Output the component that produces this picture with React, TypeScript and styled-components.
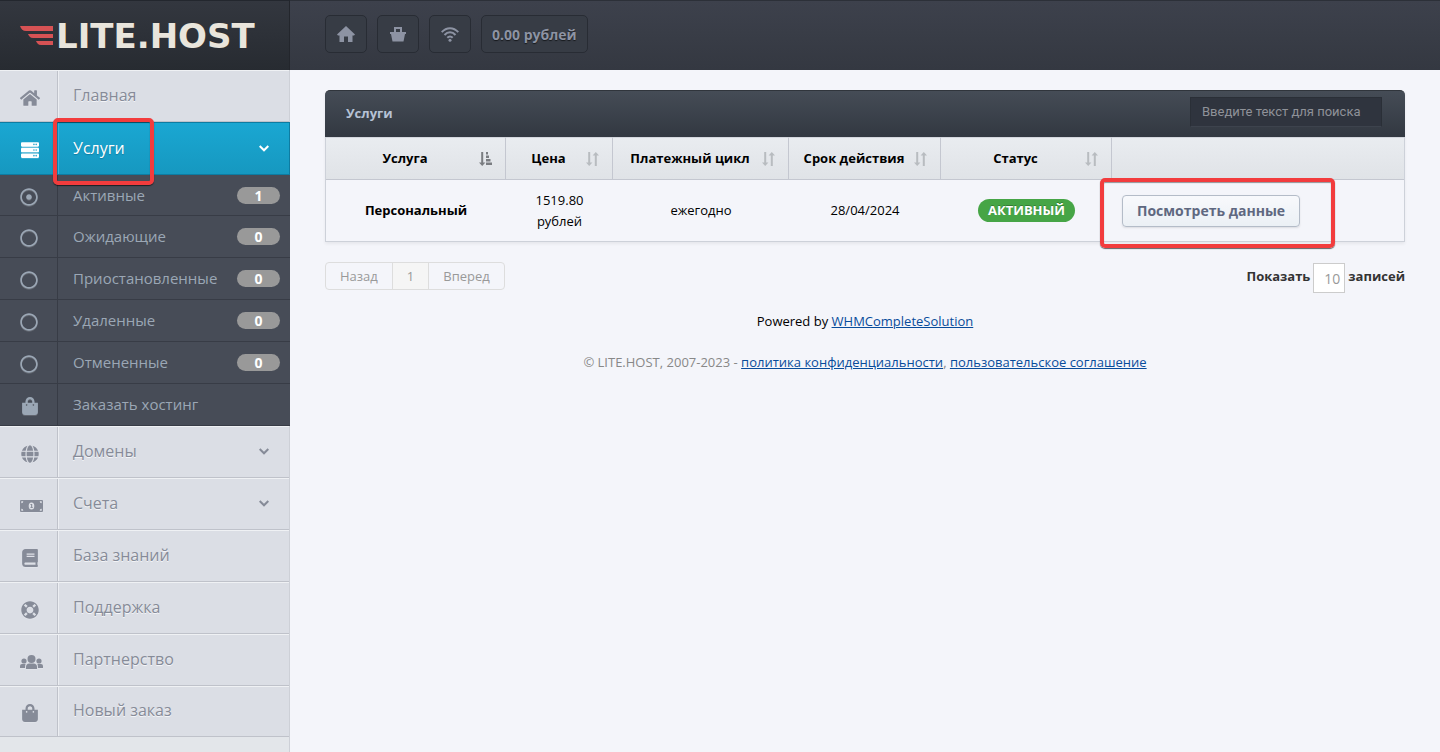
import React from "react";
import styled, { createGlobalStyle, css } from "styled-components";
import {
  FaBook,
  FaGlobe,
  FaHome,
  FaLifeRing,
  FaRegCircle,
  FaRegDotCircle,
  FaServer,
  FaShoppingBag,
} from "react-icons/fa";

const GlobalStyle = createGlobalStyle`
  *, *::before, *::after { box-sizing: border-box; }
  body {
    margin: 0;
    background: #f4f5fa;
    color: #000;
    font-family: "Open Sans", "Noto Sans", sans-serif;
    font-size: 13px;
    line-height: 21px;
  }
  button, input, select { font-family: inherit; }
`;

const Page = styled.div`
  display: grid;
  grid-template-columns: 290px minmax(0, 1fr);
  min-height: 100vh;
`;

const Sidebar = styled.aside`
  display: flex;
  flex-direction: column;
  background: #e3e6ea;
  border-right: 1px solid #cdd0d7;
`;

const Brand = styled.a`
  display: flex;
  align-items: center;
  gap: 3px;
  height: 70px;
  margin-right: -1px;
  padding-left: 20px;
  background: linear-gradient(#33373f, #272b31);
  border-top: 1px solid #23272e;
  border-right: 1px solid #23262c;
  color: #e9e5dc;
  font-family: "DejaVu Sans", sans-serif;
  font-size: 34px;
  font-weight: 700;
  line-height: 40px;
  text-decoration: none;
`;

const Menu = styled.ul`
  margin: 0;
  padding: 0;
  list-style: none;
`;

const tones = {
  light: css`
    height: 52px;
    background: #dbdee5;
    border-top: 1px solid #eff1f4;
    border-bottom: 1px solid #bfc2ca;
    color: #868b98;
    font-size: 16px;
    text-shadow: 0 1px 0 #f4f5f8;
    --divider: #bfc2ca;
    --glow: #eceef2;
    --lift: 2px;
  `,
  active: css`
    height: 53px;
    margin-right: -1px;
    background: linear-gradient(#1aa7d2, #1698c0);
    border: 1px solid #0d7ca2;
    border-left: 0;
    color: #fff;
    font-size: 16px;
    text-shadow: 0 1px 1px #0d7ca2;
    --divider: #0f86ae;
    --glow: #35b4da;
    --lift: 0;
  `,
  dark: css`
    height: 42px;
    margin-right: -1px;
    background: #474c57;
    border-bottom: 1px solid #383c46;
    color: #9ba7b5;
    font-size: 15px;
    --divider: #383c46;
    --glow: #474c57;
    --lift: 0;
  `,
};

type Tone = keyof typeof tones;

const MenuLink = styled.a<{ $tone: Tone }>`
  display: flex;
  align-items: stretch;
  text-decoration: none;
  ${(p) => tones[p.$tone]}
`;

const MenuItem = styled.li<{ $afterActive?: boolean }>`
  position: relative;
  &:last-child ${MenuLink} { height: 51px; }
  ${(p) => p.$afterActive && css`${MenuLink} { height: 41px; }`}
`;

const MenuIcon = styled.span<{ $inset?: boolean }>`
  display: flex;
  align-items: center;
  flex: 0 0 58px;
  padding: 3px 0 0 ${(p) => (p.$inset ? 21 : 20)}px;
  border-right: 1px solid var(--divider);
  svg { filter: drop-shadow(0 1px 0 rgba(255, 255, 255, 0.15)); }
`;

const MenuText = styled.span`
  display: flex;
  align-items: center;
  justify-content: space-between;
  flex: 1;
  padding: 0 10px var(--lift) 14px;
  border-left: 1px solid var(--glow);
`;

const Count = styled.span`
  width: 43px;
  border-radius: 9px;
  background: #999;
  color: #fff;
  font-size: 14px;
  font-weight: 700;
  line-height: 17px;
  text-align: center;
`;

const Marker = styled.span<{ $kind: "menu" | "action" }>`
  position: absolute;
  z-index: 2;
  border: 4px solid #f23c3d;
  border-radius: 5px;
  box-shadow: 0 1px 1px rgba(0, 0, 0, 0.6), inset 0 1px 1px rgba(0, 0, 0, 0.4);
  pointer-events: none;
  ${(p) =>
    p.$kind === "menu"
      ? css`left: 53px; top: -4px; width: 101px; height: 67px;`
      : css`left: -12px; top: -2px; width: 235px; height: 70px;`}
`;

const Content = styled.div`
  min-width: 0;
`;

const TopBar = styled.header`
  display: flex;
  gap: 10px;
  height: 70px;
  padding: 14px 35px 0;
  background: linear-gradient(#3d414c, #343841);
  border-top: 1px solid #2c3038;
`;

const TopButton = styled.button`
  display: flex;
  align-items: center;
  justify-content: center;
  min-width: 42px;
  height: 38px;
  padding: 0 10px;
  background: #373c45;
  border: 1px solid #282c34;
  border-radius: 5px;
  color: #8d93a3;
  font-size: 14px;
  font-weight: 700;
  text-shadow: 0 1px 1px #16191d;
`;

const Main = styled.main`
  padding: 20px 35px;
`;

const Panel = styled.section`
  box-shadow: 0 2px 3px rgba(0, 0, 0, 0.06);
`;

const PanelHead = styled.div`
  display: flex;
  align-items: center;
  justify-content: space-between;
  height: 47px;
  padding: 0 23px 4px 21px;
  background: linear-gradient(#454c56, #323841);
  border-top: 1px solid #30353c;
  border-radius: 5px 5px 0 0;
`;

const PanelTitle = styled.h1`
  margin: 2px 0 0;
  color: #b6c2d5;
  font-size: 13px;
  line-height: 21px;
`;

const Search = styled.input`
  width: 192px;
  height: 30px;
  padding: 0 11px 2px;
  background: #2f343e;
  border: 1px solid #2a2f37;
  border-bottom-color: #3d434d;
  color: #ccc;
  font-family: Roboto, "Liberation Sans", sans-serif;
  font-size: 13px;
  &::placeholder { color: #8f9299; opacity: 1; }
`;

const Table = styled.table`
  width: 100%;
  table-layout: fixed;
  border-collapse: separate;
  border-spacing: 0;
  border: 1px solid #cdd1d9;
  border-top: 0;
`;

const Col = styled.col<{ $w?: number }>`
  width: ${(p) => (p.$w ? `${p.$w}px` : "auto")};
`;

const Th = styled.th`
  height: 43px;
  padding: 0 13px 0 7px;
  background: linear-gradient(#e9ecf0, #e0e3e7);
  border-right: 1px solid #c4c7d0;
  border-bottom: 1px solid #c4c7d0;
  border-top: 1px solid #d3d6dd;
  &:last-child { border-right: 0; }
`;

const Sort = styled.button`
  display: flex;
  align-items: center;
  width: 100%;
  padding: 0;
  background: none;
  border: 0;
  color: #000;
  font-size: 13px;
  font-weight: 700;
  line-height: 21px;
  white-space: nowrap;
  span { flex: 1; padding-right: 2px; text-align: center; }
`;

const Td = styled.td<{ $left?: boolean }>`
  position: relative;
  height: 61px;
  padding: 9px 10px;
  text-align: ${(p) => (p.$left ? "left" : "center")};
`;

const Status = styled.span`
  display: inline-block;
  padding: 0 10px;
  background: #46a546;
  border-radius: 12px;
  color: #fff;
  font-weight: 700;
  line-height: 23px;
  text-shadow: 0 -1px 0 rgba(0, 0, 0, 0.25);
`;

const ViewButton = styled.button`
  display: block;
  height: 32px;
  padding: 0 14px;
  background: linear-gradient(#f8f9fc, #ebf0f5);
  border: 1px solid #b4bcc8;
  border-radius: 4px;
  box-shadow: 0 1px 2px rgba(0, 0, 0, 0.1);
  color: #5f6880;
  font-size: 14px;
  font-weight: 700;
  white-space: nowrap;
`;

const TableFoot = styled.div`
  display: flex;
  justify-content: space-between;
  margin-top: 20px;
`;

const Pager = styled.nav`
  display: flex;
  height: 28px;
  border: 1px solid #ddd;
  border-radius: 4px;
  overflow: hidden;
`;

const PageButton = styled.button<{ $current?: boolean }>`
  padding: 0 14px;
  background: ${(p) => (p.$current ? "#f5f5f5" : "transparent")};
  border: 0;
  border-left: 1px solid #ddd;
  color: #999;
  font-size: 13px;
  &:first-child { border-left: 0; }
`;

const Length = styled.label`
  display: flex;
  align-items: center;
  gap: 3px;
  height: 28px;
  color: #333;
  font-weight: 700;
`;

const LengthSelect = styled.select`
  appearance: none;
  width: 32px;
  height: 30px;
  margin-top: 4px;
  padding: 0 0 0 10px;
  background: #fff;
  border: 1px solid #ccc;
  border-radius: 0;
  color: #999;
  font-size: 14px;
`;

const Footer = styled.footer`
  margin-top: 21px;
  text-align: center;
  p { margin: 0 0 20px; }
  a { color: #084c9b; }
`;

const Copyright = styled.p`
  color: #888;
`;

const Wing = () => (
  <svg width="33" height="19" viewBox="0 0 33 19" fill="#d65254" aria-hidden="true">
    <path d="M0 0H33V5H6C3 5 1 3 0 0Z" />
    <path d="M8 8H33V12H13C10 12 9 10 8 8Z" />
    <path d="M16 15H33V19H21C18 19 17 17 16 15Z" />
  </svg>
);

const ArrowIcon = styled.svg`
  width: 10px;
  height: 7px;
  margin-right: 10px;
  fill: none;
  stroke: currentColor;
  stroke-width: 2;
`;

const Arrow = () => (
  <ArrowIcon viewBox="0 0 10 7" aria-hidden="true">
    <path d="M.7 1L5 5.300L9.300 1" />
  </ArrowIcon>
);

const MoneyIcon = () => (
  <svg width="23" height="12" viewBox="0 0 23 12" aria-hidden="true">
    <path
      fill="currentColor"
      fillRule="evenodd"
      d="M1 0H22Q23 0 23 1V11Q23 12 22 12H1Q0 12 0 11V1Q0 0 1 0ZM1.300 1.300V3.300Q3.300 3.300 3.300 1.300ZM21.700 1.300H19.700Q19.700 3.300 21.700 3.300ZM1.300 10.700H3.300Q3.300 8.700 1.300 8.700ZM21.700 10.700V8.700Q19.700 8.700 19.700 10.700ZM11.500 2.500A2.800 3.500 0 1 0 11.500 9.500A2.800 3.500 0 1 0 11.500 2.500ZM10.500 4H12.200V7.300H12.900V8.100H10.400V7.300H11.100V5H10.500Z"
    />
  </svg>
);

const UsersIcon = () => (
  <svg width="23" height="14" viewBox="0 0 23 14" fill="currentColor" aria-hidden="true">
    <circle cx="11.500" cy="4" r="4" />
    <circle cx="4" cy="6" r="2.600" />
    <circle cx="19" cy="6" r="2.600" />
    <path d="M6 14V12Q6 8.500 9.500 8.500H13.500Q17 8.500 17 12V14Z" />
    <path d="M0 13V11Q0 9 2 9H5.600Q5 10 5 13ZM23 13V11Q23 9 21 9H17.400Q18 10 18 13Z" />
  </svg>
);

const HomeGlyph = () => (
  <svg width="18" height="16" viewBox="0 0 18 16" aria-hidden="true">
    <path fill="currentColor" d="M9 0L18 8.600L17 9.600H15.500V16H11V10.500H7V16H2.500V9.600H1L0 8.600Z" />
  </svg>
);

const BasketGlyph = () => (
  <svg width="16" height="15" viewBox="0 0 16 15" aria-hidden="true">
    <path fill="currentColor" fillRule="evenodd" d="M4 0H12V5H16V7H15L13.500 14.500H2.500L1 7H0V5H4ZM6 2V5H10V2Z" />
  </svg>
);

const WifiGlyph = () => (
  <svg width="18" height="15" viewBox="0 0 18 15" fill="none" stroke="currentColor" strokeWidth="2" aria-hidden="true">
    <path d="M.7 5.200C5.500-.2 12.500-.2 17.300 5.200M3.500 8C6.700 4.300 11.300 4.300 14.500 8M6.300 10.800C8 9 10 9 11.700 10.800" />
    <circle cx="9" cy="13.200" r="1.500" fill="currentColor" stroke="none" />
  </svg>
);

const SortBoth = () => (
  <svg width="13" height="14" viewBox="0 0 13 14" fill="#b8bcc0" aria-hidden="true">
    <path d="M2.200 0H4.200V10.500H6.400L3.200 14L0 10.500H2.200Z" />
    <path d="M8.800 14H10.800V3.500H13L9.800 0L6.600 3.500H8.800Z" />
  </svg>
);

const SortAsc = () => (
  <svg width="13" height="14" viewBox="0 0 13 14" fill="#7a7d81" aria-hidden="true">
    <path d="M2.200 0H4.200V10.500H6.400L3.200 14L0 10.500H2.200Z" />
    <path d="M7 0H9V2.500H7ZM7 3.500H10V6H7ZM7 7H11.500V9.500H7ZM7 10.500H13V13H7Z" />
  </svg>
);

type Entry = {
  label: string;
  icon: React.ReactNode;
  tone: Tone;
  inset?: boolean;
  count?: number;
  arrow?: boolean;
  marked?: boolean;
};

const entries: Entry[] = [
  { label: "Главная", icon: <FaHome size={20} />, tone: "light" },
  { label: "Услуги", icon: <FaServer size={18} />, tone: "active", inset: true, arrow: true, marked: true },
  { label: "Активные", icon: <FaRegDotCircle size={18} />, tone: "dark", count: 1 },
  { label: "Ожидающие", icon: <FaRegCircle size={18} />, tone: "dark", count: 0 },
  { label: "Приостановленные", icon: <FaRegCircle size={18} />, tone: "dark", count: 0 },
  { label: "Удаленные", icon: <FaRegCircle size={18} />, tone: "dark", count: 0 },
  { label: "Отмененные", icon: <FaRegCircle size={18} />, tone: "dark", count: 0 },
  { label: "Заказать хостинг", icon: <FaShoppingBag size={18} />, tone: "dark", inset: true },
  { label: "Домены", icon: <FaGlobe size={18} />, tone: "light", inset: true, arrow: true },
  { label: "Счета", icon: <MoneyIcon />, tone: "light", arrow: true },
  { label: "База знаний", icon: <FaBook size={18} />, tone: "light", inset: true },
  { label: "Поддержка", icon: <FaLifeRing size={18} />, tone: "light", inset: true },
  { label: "Партнерство", icon: <UsersIcon />, tone: "light" },
  { label: "Новый заказ", icon: <FaShoppingBag size={18} />, tone: "light", inset: true },
];

const columns = ["Услуга", "Цена", "Платежный цикл", "Срок действия", "Статус"];

export default function App() {
  return (
    <>
      <GlobalStyle />
      <Page>
        <Sidebar>
          <Brand href="#">
            <Wing />
            LITE.HOST
          </Brand>
          <Menu>
            {entries.map((e, i) => (
              <MenuItem key={e.label} $afterActive={entries[i - 1]?.tone === "active"}>
                <MenuLink href="#" $tone={e.tone}>
                  <MenuIcon $inset={e.inset}>{e.icon}</MenuIcon>
                  <MenuText>
                    {e.label}
                    {e.arrow && <Arrow />}
                    {e.count !== undefined && <Count>{e.count}</Count>}
                  </MenuText>
                </MenuLink>
                {e.marked && <Marker $kind="menu" />}
              </MenuItem>
            ))}
          </Menu>
        </Sidebar>
        <Content>
          <TopBar>
            <TopButton aria-label="Главная"><HomeGlyph /></TopButton>
            <TopButton aria-label="Корзина"><BasketGlyph /></TopButton>
            <TopButton aria-label="Сеть"><WifiGlyph /></TopButton>
            <TopButton>0.00 рублей</TopButton>
          </TopBar>
          <Main>
            <Panel>
              <PanelHead>
                <PanelTitle>Услуги</PanelTitle>
                <Search type="text" aria-label="Поиск" placeholder="Введите текст для поиска" />
              </PanelHead>
              <Table>
                <colgroup>
                  <Col $w={180} />
                  <Col $w={107} />
                  <Col $w={176} />
                  <Col $w={152} />
                  <Col $w={171} />
                  <Col />
                </colgroup>
                <thead>
                  <tr>
                    {columns.map((c, i) => (
                      <Th key={c}>
                        <Sort>
                          <span>{c}</span>
                          {i === 0 ? <SortAsc /> : <SortBoth />}
                        </Sort>
                      </Th>
                    ))}
                    <Th />
                  </tr>
                </thead>
                <tbody>
                  <tr>
                    <Td><b>Персональный</b></Td>
                    <Td>1519.80 рублей</Td>
                    <Td>ежегодно</Td>
                    <Td>28/04/2024</Td>
                    <Td><Status>АКТИВНЫЙ</Status></Td>
                    <Td $left>
                      <ViewButton>Посмотреть данные</ViewButton>
                      <Marker $kind="action" />
                    </Td>
                  </tr>
                </tbody>
              </Table>
            </Panel>
            <TableFoot>
              <Pager>
                <PageButton>Назад</PageButton>
                <PageButton $current>1</PageButton>
                <PageButton>Вперед</PageButton>
              </Pager>
              <Length>
                Показать
                <LengthSelect defaultValue="10">
                  <option>10</option>
                </LengthSelect>
                записей
              </Length>
            </TableFoot>
            <Footer>
              <p>Powered by <a href="#">WHMCompleteSolution</a></p>
              <Copyright>
                © LITE.HOST, 2007-2023 - <a href="#">политика конфиденциальности</a>,{" "}
                <a href="#">пользовательское соглашение</a>
              </Copyright>
            </Footer>
          </Main>
        </Content>
      </Page>
    </>
  );
}
